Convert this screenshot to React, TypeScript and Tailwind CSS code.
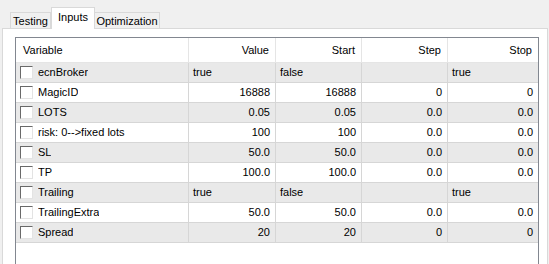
import React from "react";

type Row = { name: string; value: string; start: string; step: string; stop: string; bool?: boolean };

const rows: Row[] = [
  { name: "ecnBroker", value: "true", start: "false", step: "", stop: "true", bool: true },
  { name: "MagicID", value: "16888", start: "16888", step: "0", stop: "0" },
  { name: "LOTS", value: "0.05", start: "0.05", step: "0.0", stop: "0.0" },
  { name: "risk: 0-->fixed lots", value: "100", start: "100", step: "0.0", stop: "0.0" },
  { name: "SL", value: "50.0", start: "50.0", step: "0.0", stop: "0.0" },
  { name: "TP", value: "100.0", start: "100.0", step: "0.0", stop: "0.0" },
  { name: "Trailing", value: "true", start: "false", step: "", stop: "true", bool: true },
  { name: "TrailingExtra", value: "50.0", start: "50.0", step: "0.0", stop: "0.0" },
  { name: "Spread", value: "20", start: "20", step: "0", stop: "0" },
];

const cols = "grid grid-cols-[173px_87px_86px_86px_90px]";

function Cell({ children, bool, last }: { children: React.ReactNode; bool?: boolean; last?: boolean }) {
  return (
    <div
      className={`flex items-center h-full truncate ${bool ? "justify-start pl-[4px]" : "justify-end pr-[5px]"} ${
        last ? "" : "border-r border-[#d6d6d6]"
      }`}
    >
      {children}
    </div>
  );
}

export default function App() {
  return (
    <div
      className="w-[549px] h-[264px] overflow-hidden bg-[#f0f0f0] text-[11px] text-black"
      style={{ fontFamily: '"Liberation Sans", Arial, sans-serif' }}
    >
      {/* tabs */}
      <div className="h-[28px] pl-[10px] flex items-end">
        <div className="h-[16px] w-[41px] border border-b-0 border-[#d9d9d9] bg-[#f0f0f0] flex items-center justify-center leading-none pt-[1px]">
          Testing
        </div>
        <div className="relative z-10 h-[22px] w-[44px] mb-[-1px] border border-b-0 border-[#d9d9d9] bg-white flex items-start justify-center leading-none pt-[4px]">
          Inputs
        </div>
        <div className="h-[16px] w-[65px] border border-b-0 border-l-0 border-[#d9d9d9] bg-[#f0f0f0] flex items-center justify-center leading-none pt-[1px]">
          Optimization
        </div>
      </div>
      {/* panel */}
      <div className="ml-[2px] w-[546px] h-[260px] border border-[#d9d9d9] bg-white pl-[12px] pt-[8px]">
        <div className="w-[524px] h-[260px] border border-[#828790] bg-white">
          {/* header */}
          <div className={`${cols} h-[25px] border-b border-[#e5e5e5]`}>
            <div className="flex items-center pl-[7px] border-r border-[#e5e5e5]">Variable</div>
            <div className="flex items-center justify-end pr-[6px] border-r border-[#e5e5e5]">Value</div>
            <div className="flex items-center justify-end pr-[6px] border-r border-[#e5e5e5]">Start</div>
            <div className="flex items-center justify-end pr-[6px] border-r border-[#e5e5e5]">Step</div>
            <div className="flex items-center justify-end pr-[6px]">Stop</div>
          </div>
          {rows.map((r, i) => (
            <div
              key={r.name}
              className={`${cols} h-[20px] border-b border-[#d6d6d6] ${i % 2 === 0 ? "bg-[#e9e9e9]" : "bg-white"}`}
            >
              <div className="flex items-center pl-[4px] border-r border-[#d6d6d6] h-full">
                <span className="w-[13px] h-[13px] border-t border-l border-[#696969] border-r border-b border-r-[#e3e3e3] border-b-[#e3e3e3] bg-white shrink-0" />
                <span className="ml-[5px] truncate">{r.name}</span>
              </div>
              <Cell bool={r.bool}>{r.value}</Cell>
              <Cell bool={r.bool}>{r.start}</Cell>
              <Cell bool={r.bool}>{r.step}</Cell>
              <Cell bool={r.bool} last>
                {r.stop}
              </Cell>
            </div>
          ))}
        </div>
      </div>
    </div>
  );
}
